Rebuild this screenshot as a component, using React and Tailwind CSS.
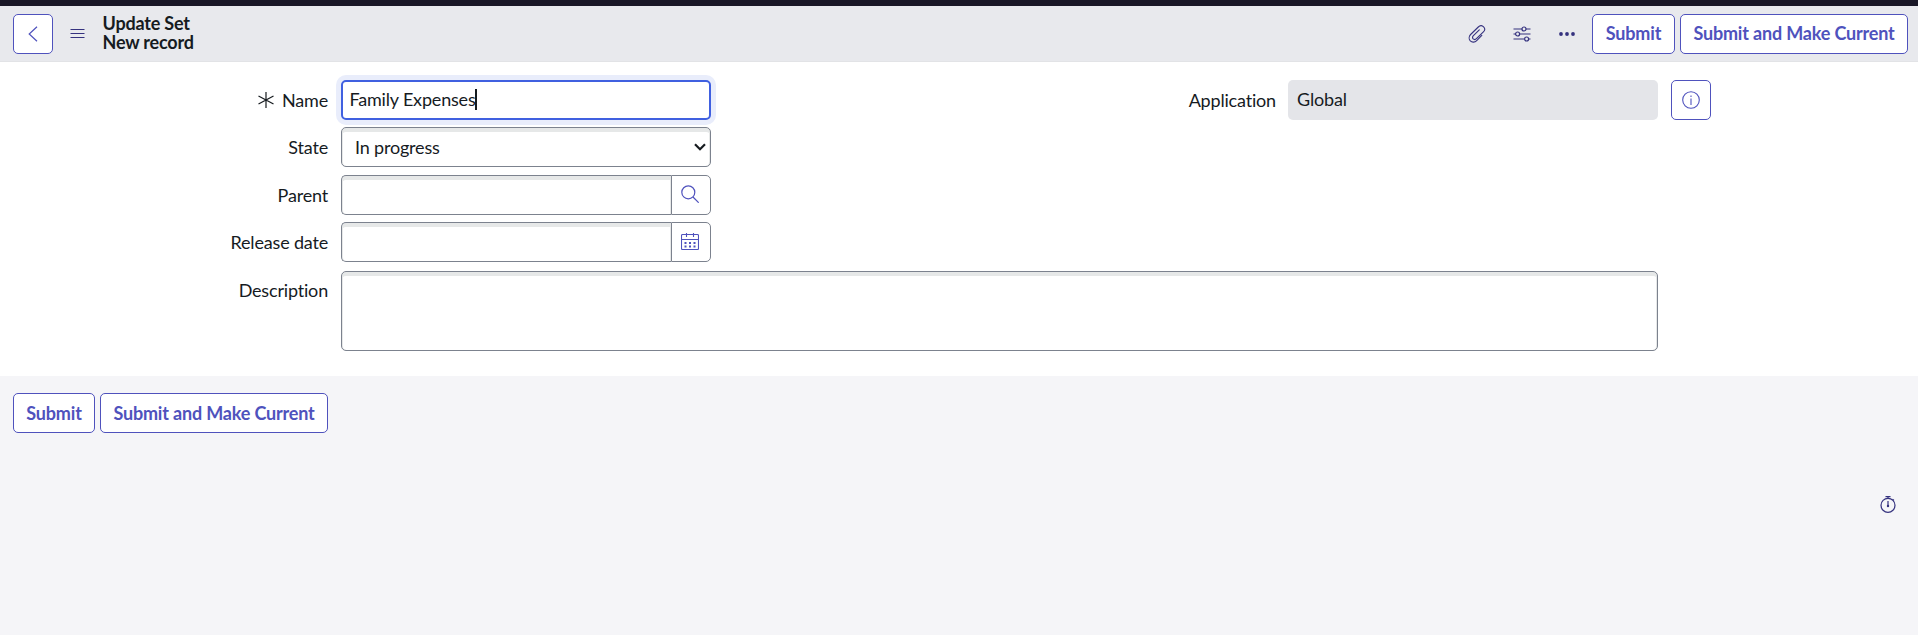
const ink = "text-[#161b1f]";

function TextButton({ children, className = "" }) {
  return (
    <button
      type="button"
      className={`h-10 shrink-0 whitespace-nowrap rounded-[5px] border border-[#4f52bd] bg-white text-center text-[18px] font-bold tracking-[-0.17px] text-[#4f52bd] ${className}`}
    >
      {children}
    </button>
  );
}

function Label({ children, className = "" }) {
  return (
    <div className={`flex h-10 shrink-0 items-center justify-end whitespace-nowrap ${className}`}>
      {children}
    </div>
  );
}

const fieldShadow = "shadow-[inset_0_4px_0_#e6e8e8,inset_1px_0_0_#e6e8e8,inset_-1px_0_0_#e6e8e8]";

function LookupField({ children }) {
  return (
    <div className="flex h-10 w-[370px]">
      <div className={`w-[330px] rounded-l-[5px] border border-r-0 border-[#7c828e] bg-white ${fieldShadow}`} />
      <button type="button" className="flex w-10 items-center justify-center rounded-r-[5px] border border-[#7c828e] bg-white pb-[2px] pr-[2px]">
        {children}
      </button>
    </div>
  );
}

function Paperclip() {
  return (
    <svg width="18" height="18" viewBox="0 0 18 18" fill="none" stroke="#35327f" strokeWidth="1.100" strokeLinecap="round" strokeLinejoin="round">
      <path d="M13.800 10.300 8.700 15.600C6.800 17.500 4 17.600 2.300 15.900.7 14.200.8 11.400 2.600 9.500L10.300 2C11.900.4 14.200.4 15.600 1.800c1.400 1.400 1.300 3.600-.2 5.100L8.400 13.700c-1 1-2.300 1-3.200.2-.8-.9-.8-2.200.2-3.200l5.900-5.900" />
    </svg>
  );
}

function Sliders() {
  return (
    <svg width="18" height="16" viewBox="0 0 18 16" fill="none" stroke="#35327f" strokeWidth="1.200">
      <path d="M.5 3H9M13 3h4.500M.5 8h2M6.700 8h10.800M.5 13h11M15.700 13h1.800" />
      <circle cx="11" cy="3" r="2" />
      <circle cx="4.600" cy="8" r="2" />
      <circle cx="13.600" cy="13" r="2" />
    </svg>
  );
}

export default function App() {
  return (
    <div className={`flex h-[635px] w-full flex-col overflow-hidden bg-[#f5f5f8] font-['Lato',sans-serif] text-[18px] leading-[19px] tracking-[-0.18px] [font-variant-ligatures:none] ${ink}`}>
      <div className="h-[6px] shrink-0 bg-[#191726]" />
      <header className="flex h-14 shrink-0 items-center border-b border-[#e2e3e6] bg-[#e8e9ed] pl-[13px] pr-[10px]">
        <button type="button" className="flex size-10 items-center justify-center rounded-[5px] border border-[#4f52bd] bg-white pr-px">
          <svg width="10" height="16" viewBox="0 0 10 16" fill="none" stroke="#4f52bd" strokeWidth="1.200">
            <path d="M9 .8 1.200 8 9 15.200" />
          </svg>
        </button>
        <svg className="ml-[17px]" width="15" height="10" viewBox="0 0 15 10" stroke="#35327f" strokeWidth="1">
          <path d="M.5.5h14M.5 4.500h14M.5 8.500h14" />
        </svg>
        <h1 className="ml-[17.500px] pb-[2px] font-bold">
          Update Set
          <br />
          New record
        </h1>
        <div className="ml-auto flex items-center">
          <Paperclip />
          <span className="ml-[27px]"><Sliders /></span>
          <svg className="ml-[28px]" width="16" height="4" viewBox="0 0 16 4" fill="#35327f">
            <circle cx="2" cy="2" r="1.900" />
            <circle cx="8" cy="2" r="1.900" />
            <circle cx="14" cy="2" r="1.900" />
          </svg>
          <TextButton className="ml-[17px] w-[83px] pb-px">Submit</TextButton>
          <TextButton className="ml-[5px] w-[228px] pb-px">Submit and Make Current</TextButton>
        </div>
      </header>

      <main className="h-[314px] shrink-0 bg-white pt-[18px]">
        <div className="flex">
          <Label className="w-[328px]">
            <svg className="mr-[8px]" width="16" height="16" viewBox="0 0 16 16" stroke="#161b1f" strokeWidth="1.200">
              <path d="M8 0v16M.5 4l15 8M15.500 4l-15 8" />
            </svg>
            Name
          </Label>
          <div className="ml-[13px] flex h-10 w-[370px] items-center rounded-[5px] border-2 border-[#4060e0] bg-white pb-px pl-[6.500px] shadow-[0_0_0_5px_#e9edfb]">
            Family Expenses
            <span className="-ml-px h-[21px] w-[2px] bg-[#161b1f]" />
          </div>
          <Label className="w-[565px]">Application</Label>
          <div className="ml-3 flex h-10 w-[370px] items-center rounded-[5px] bg-[#e4e5e9] pb-px pl-[9px]">Global</div>
          <button type="button" className="ml-[13px] flex size-10 items-center justify-center rounded-[5px] border border-[#4f52bd] bg-white pb-px pr-px">
            <svg width="18" height="18" viewBox="0 0 18 18" fill="none" stroke="#4f52bd" strokeWidth="1.100">
              <circle cx="9" cy="9" r="8.300" />
              <path d="M9 7.500V14M9 4.500v1.500" />
            </svg>
          </button>
        </div>
        <div className="mt-[7px] flex">
          <Label className="w-[328px]">State</Label>
          <div className={`ml-[13px] flex h-10 w-[370px] items-center justify-between rounded-[5px] border border-[#7c828e] bg-white pl-[13px] pr-[4px] ${fieldShadow}`}>
            In progress
            <svg width="12" height="8" viewBox="0 0 12 8" fill="none" stroke="#161b1f" strokeWidth="2.200">
              <path d="M1 1.200 6 6.200 11 1.200" />
            </svg>
          </div>
        </div>
        <div className="mt-2 flex">
          <Label className="w-[328px]">Parent</Label>
          <div className="ml-[13px]">
            <LookupField>
              <svg width="18" height="18" viewBox="0 0 18 18" fill="none" stroke="#4f52bd" strokeWidth="1.200">
                <circle cx="7.300" cy="7.300" r="6.500" />
                <path d="m12 12 5.700 5.700" />
              </svg>
            </LookupField>
          </div>
        </div>
        <div className="mt-[7px] flex">
          <Label className="w-[328px]">Release date</Label>
          <div className="ml-[13px]">
            <LookupField>
              <svg width="18" height="17" viewBox="0 0 18 17" fill="none" stroke="#4f52bd" strokeWidth="1.100">
                <rect x=".5" y="1.500" width="17" height="15" rx="1" />
                <path d="M.5 6.500h17M5.500 0v4M12.500 0v4" />
                <path d="M3.500 10h2M8 10h2M12.500 10h2M3.500 13.500h2M8 13.500h2M12.500 13.500h2" strokeWidth="2" />
              </svg>
            </LookupField>
          </div>
        </div>
        <div className="mt-[9px] flex">
          <Label className="w-[328px] pb-[2px]">Description</Label>
          <div className={`ml-[13px] h-20 w-[1317px] rounded-[5px] border border-[#7c828e] bg-white ${fieldShadow}`} />
        </div>
      </main>

      <footer className="flex flex-1 flex-col pl-[13px] pr-[22.500px] pt-[17px]">
        <div className="flex gap-[5px]">
          <TextButton className="w-[82px]">Submit</TextButton>
          <TextButton className="w-[228px]">Submit and Make Current</TextButton>
        </div>
        <svg className="mt-[63px] self-end" width="16" height="17" viewBox="0 0 16 17" fill="none" stroke="#35327f" strokeWidth="1.200">
          <circle cx="8" cy="9.300" r="7" />
          <path d="M5.500.6h5M8 .6v2M8 5v5M12.500 3.200l1.500 1.200" />
          <circle cx="8" cy="10" r=".6" />
        </svg>
      </footer>
    </div>
  );
}
